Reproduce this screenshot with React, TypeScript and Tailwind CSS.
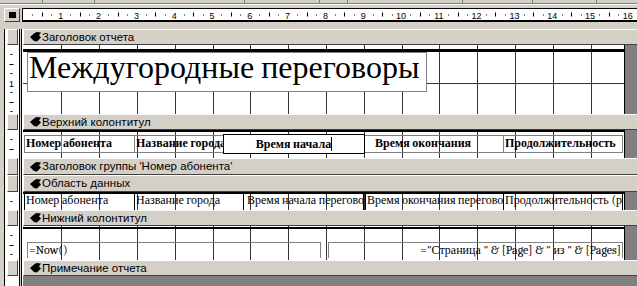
import React from "react";

const CM = 37.8;
const sans = "[font-family:Liberation_Sans,Arial,sans-serif]";
const serif = "font-serif";

function SectionIcon() {
  return (
    <svg width="11" height="10" viewBox="0 0 11 10" className="shrink-0">
      <path d="M0 5 L4 1.5 L6.5 0 L11 0.5 L9 3.5 L11 5.5 L7 9.5 L4 9 Z" fill="#000" />
    </svg>
  );
}

// left strip: gray | black | white ruler | black | gray | black | white
function LeftCol({ children }: { children?: React.ReactNode }) {
  return (
    <div className="flex w-[23px] shrink-0 bg-[#d4d0c8]">
      <div className="w-[4px]" />
      <div className="relative w-[15px] border-l border-black bg-white">{children}</div>
      <div className="w-[1px] bg-black" />
      <div className="w-[1px] bg-[#d4d0c8]" />
      <div className="w-[1px] bg-black" />
      <div className="w-[1px] bg-white" />
    </div>
  );
}

function VRuler({ h }: { h: number }) {
  const marks = [];
  for (let k = 1; (k * CM) / 4 < h - 1; k++) {
    const y = Math.round((k * CM) / 4);
    if (k % 4 === 0) {
      marks.push(
        <text key={k} x={6.5} y={y + 3.5} textAnchor="middle" fontSize="9" fontFamily="Liberation Sans, Arial, sans-serif" fill="#000">
          {k / 4}
        </text>
      );
    } else if (k % 2 === 0) {
      marks.push(<rect key={k} x={4.5} y={y} width={4} height={1} fill="#000" />);
    } else {
      marks.push(<rect key={k} x={5.5} y={y} width={2} height={1} fill="#000" />);
    }
  }
  return (
    <svg width="14" height={h} className="block">
      {marks}
    </svg>
  );
}

function HRuler() {
  const marks = [];
  for (let n = 0; n < 16; n++) {
    for (let q = 1; q <= 4; q++) {
      const x = CM * (n + q / 4);
      const key = `${n}-${q}`;
      if (q === 4) {
        marks.push(
          <text key={key} x={x} y={9.5} textAnchor="middle" fontSize="9" fontFamily="Liberation Sans, Arial, sans-serif" fill="#000">
            {n + 1}
          </text>
        );
      } else if (q === 2) {
        marks.push(<rect key={key} x={Math.round(x)} y={3.5} width={1} height={4} fill="#000" />);
      } else {
        marks.push(<rect key={key} x={Math.round(x)} y={5.5} width={1} height={1} fill="#000" />);
      }
    }
  }
  return (
    <svg width="614" height="11" className="block">
      {marks}
    </svg>
  );
}

function Grid({ h }: { h: number }) {
  const lines = [];
  for (let n = 1; n < 16; n++) {
    lines.push(<rect key={`v${n}`} x={Math.round(CM * n + 0.5)} y={0} width={1} height={h} fill="#333" />);
  }
  for (let m = 1; CM * m < h; m++) {
    lines.push(<rect key={`h${m}`} x={0} y={Math.round(CM * m)} width={601} height={1} fill="#333" />);
  }
  return (
    <svg width="601" height={h} className="absolute left-0 top-0">
      {lines}
    </svg>
  );
}

function SectionBar({ label, tall }: { label: string; tall?: boolean }) {
  return (
    <div className={`flex ${tall ? "h-[17px]" : "h-[16px]"}`}>
      <LeftCol>
        <div className="ml-[2px] h-full w-[11px] border border-t-white border-l-white border-r-[#404040] border-b-[#404040] bg-[#d4d0c8]" />
      </LeftCol>
      <div className="flex flex-1 items-center gap-[1px] border-t border-l border-white border-b border-b-[#404040] bg-[#d4d0c8] pl-[6px]">
        <SectionIcon />
        <span className={`${sans} whitespace-nowrap text-[11.5px] leading-[13px] text-black`}>{label}</span>
      </div>
    </div>
  );
}

function Body({ h, hClass, children }: { h: number; hClass: string; children?: React.ReactNode }) {
  return (
    <div className={`flex ${hClass}`}>
      <LeftCol>
        <VRuler h={h} />
      </LeftCol>
      <div className="relative w-[602px] shrink-0 overflow-hidden border-r border-black bg-white">
        <Grid h={h} />
        <div className="relative">{children}</div>
      </div>
      <div className="flex-1 bg-[#808080]" />
    </div>
  );
}

const headCell = `${serif} h-[18px] overflow-hidden whitespace-nowrap border-y border-[#808080] text-[12px] font-bold leading-[14px] text-black`;
const dataCell = `${serif} h-[16px] overflow-hidden whitespace-nowrap border-l border-black text-[12px] leading-[12px] text-black`;

export default function App() {
  return (
    <div className="flex h-[286px] w-[637px] flex-col overflow-hidden bg-[#d4d0c8]">
      {/* window edge above */}
      <div className="flex h-[3px]">
        <div className="w-[43px] border-r border-[#808080]" />
        <div className="w-[52px] border-r border-[#808080]" />
        <div className="w-[150px] border-r border-[#808080]" />
        <div className="w-[75px] border-r border-[#808080]" />
        <div className="w-[28px] border-r border-[#808080]" />
        <div className="w-[115px] border-r border-[#808080]" />
        <div className="w-[70px] border-r border-[#808080]" />
        <div className="w-[64px] border-r border-[#808080]" />
      </div>
      <div className="h-[1px] bg-[#808080]" />
      <div className="h-[1px] bg-white" />
      <div className="h-[3px]" />

      {/* ruler */}
      <div className="flex h-[14px]">
        <div className="w-[4px]" />
        <div className="flex w-[16px] items-center justify-center border border-t-white border-l-white border-r-[#404040] border-b-[#404040]">
          <div className="h-[6px] w-[7px] bg-black" />
        </div>
        <div className="w-[2px]" />
        <div className="flex-1 border-t border-l border-b-2 border-black bg-white">
          <HRuler />
        </div>
      </div>
      <div className="h-[7px]" />

      <SectionBar label="Заголовок отчета" />
      <Body h={69} hClass="h-[69px]">
        <div className="h-[4px]" />
        <div className="h-[3px] bg-black" />
        <div className="ml-[4px] h-[40px] w-[400px] border border-[#808080] bg-white pl-[1px]">
          <span className={`${serif} block whitespace-nowrap text-[32px] leading-[29px] text-black`}>Междугородные переговоры</span>
        </div>
      </Body>

      <SectionBar label="Верхний колонтитул" />
      <Body h={28} hClass="h-[28px]">
        <div className="h-[2px] bg-black" />
        <div className="mt-[2px] flex h-[20px] items-center">
          <div className={`${headCell} ml-[1px] w-[37px] border-l pl-[1px]`}>Номер</div>
          <div className={`${headCell} w-[73px] border-l pl-[1px]`}>абонента</div>
          <div className={`${headCell} w-[89px] border-l pl-[1px]`}>Название города</div>
          <div className={`${serif} flex h-[20px] w-[142px] items-center justify-center border border-black bg-white text-[12px] font-bold leading-[14px] text-black`}>
            <span>Время начала</span>
            <span className="inline-block h-[14px] w-[1px] bg-black" />
          </div>
          <div className={`${headCell} w-[138px] pl-[10px]`}>Время окончания</div>
          <div className={`${headCell} w-[120px] border-x pl-[1px]`}>Продолжительность</div>
        </div>
      </Body>

      <SectionBar label="Заголовок группы 'Номер абонента'" tall />
      <SectionBar label="Область данных" tall />
      <Body h={18} hClass="h-[18px]">
        <div className="h-[2px] bg-black" />
        <div className="flex h-[16px]">
          <div className={`${dataCell} ml-[1px] w-[110px] pl-[1px]`}>Номер абонента</div>
          <div className={`${dataCell} w-[109px] pl-[1px]`}>Название города</div>
          <div className={`${dataCell} w-[121px] border-r pl-[3px]`}>Время начала переговоров</div>
          <div className={`${dataCell} ml-[1px] w-[138px] pl-[1px]`}>Время окончания переговоров</div>
          <div className={`${dataCell} w-[120px] border-r pl-[1px]`}>Продолжительность (расчетная)</div>
        </div>
      </Body>

      <SectionBar label="Нижний колонтитул" />
      <Body h={34} hClass="h-[34px]">
        <div className="h-[1px]" />
        <div className="h-[2px] bg-black" />
        <div className="mt-[13px] flex h-[16px]">
          <div className={`${serif} ml-[4px] w-[294px] overflow-hidden whitespace-nowrap border-t border-x border-[#808080] pl-[1px] text-[12px] leading-[14px] text-black`}>
            =Now()
          </div>
          <div className={`${serif} ml-[7px] w-[295px] overflow-hidden whitespace-nowrap border-t border-x border-[#808080] pr-[1px] text-right text-[12px] leading-[14px] text-black`}>
            {'="Страница " & [Page] & " из " & [Pages]'}
          </div>
        </div>
      </Body>

      <SectionBar label="Примечание отчета" />
      <div className="flex flex-1">
        <LeftCol />
        <div className="flex-1 bg-[#808080]" />
      </div>
    </div>
  );
}
